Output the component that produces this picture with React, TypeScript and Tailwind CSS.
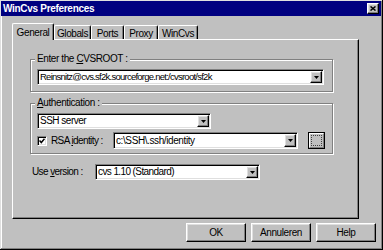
import React from "react";

const raised =
  "bg-[#c0c0c0] border-t border-l border-t-white border-l-white border-r border-b border-r-black border-b-black shadow-[inset_-1px_-1px_0_#808080,inset_1px_1px_0_#dfdfdf]";
const sunken =
  "bg-white border-t border-l border-t-[#808080] border-l-[#808080] border-r border-b border-r-white border-b-white shadow-[inset_1px_1px_0_#000,inset_-1px_-1px_0_#dfdfdf]";

function Arrow() {
  return (
    <svg width="5" height="3" viewBox="0 0 5 3">
      <polygon points="0,0 5,0 2.5,3" fill="#000" />
    </svg>
  );
}

function Combo({
  value,
  w,
  h = 16,
  textClass = "",
}: {
  value: string;
  w: number;
  h?: number;
  textClass?: string;
}) {
  return (
    <div className={`${sunken} flex items-stretch p-[1px]`} style={{ width: w, height: h }}>
      <div className={`flex-1 flex items-center pl-[1px] overflow-hidden whitespace-nowrap ${textClass}`}>{value}</div>
      <div className={`${raised} w-[12px] flex items-center justify-center`}>
        <Arrow />
      </div>
    </div>
  );
}

function Group({ label, h, children }: { label: React.ReactNode; h: number; children: React.ReactNode }) {
  return (
    <div
      className="relative w-[303px] border border-[#808080] shadow-[1px_1px_0_#fff,inset_1px_1px_0_#fff] pt-[9px] pl-[6px] flex flex-col"
      style={{ height: h }}
    >
      <span className="absolute left-[4px] top-[-7px] bg-[#c0c0c0] px-[2px] leading-[11px] whitespace-nowrap">
        {label}
      </span>
      {children}
    </div>
  );
}

const tabs = [
  { name: "Globals", w: 37 },
  { name: "Ports", w: 33 },
  { name: "Proxy", w: 34 },
  { name: "WinCvs", w: 40 },
];

export default function App() {
  return (
    <div className="w-[383px] h-[250px] bg-[#c0c0c0] text-black text-[10px] tracking-[-0.4px] leading-none font-['Liberation_Sans',Arial,sans-serif] shadow-[inset_-1px_-1px_0_#000,inset_1px_1px_0_#dfdfdf,inset_-2px_-2px_0_#808080,inset_2px_2px_0_#fff] flex flex-col overflow-hidden">
      {/* title bar */}
      <div className="mt-[1px] ml-[1px] mr-[2px] h-[15px] bg-[#000080] flex items-center justify-between pl-[2px] pr-[2px]">
        <span className="text-white font-bold text-[10px] tracking-[-0.3px]">WinCvs Preferences</span>
        <div className={`${raised} w-[12px] h-[11px] flex items-center justify-center`}>
          <svg width="6" height="5" viewBox="0 0 6 5">
            <path d="M0.5 0.5 L5.5 4.5 M5.5 0.5 L0.5 4.5" stroke="#000" strokeWidth="1.5" />
          </svg>
        </div>
      </div>

      {/* tabs */}
      <div className="mt-[7px] ml-[12px] h-[16px] flex items-end">
        <div className="relative z-10 -mb-px h-[17px] w-[42px] bg-[#c0c0c0] border-l border-t border-white border-r border-r-black rounded-t-[2px] shadow-[inset_-1px_0_0_#808080] flex items-center justify-center pt-[1px]">
          General
        </div>
        {tabs.map((t) => (
          <div
            key={t.name}
            className="h-[14px] border-l border-t border-white border-r border-r-black rounded-t-[2px] shadow-[inset_-1px_0_0_#808080] flex items-center justify-center pt-[2px]"
            style={{ width: t.w }}
          >
            {t.name}
          </div>
        ))}
      </div>

      {/* page */}
      <div className="ml-[12px] w-[347px] h-[180px] border-l border-t border-white border-r border-b border-r-black border-b-black shadow-[inset_-1px_-1px_0_#808080] pt-[19px] pl-[17px] flex flex-col">
        <Group
          h={33}
          label={
            <>
              Enter the <u className="underline-offset-1">C</u>VSROOT :
            </>
          }
        >
          <Combo
            value="Reinsnitz@cvs.sf2k.sourceforge.net:/cvsroot/sf2k"
            w={287}
            textClass="text-[9.5px] tracking-[-0.75px]"
          />
        </Group>

        <div className="mt-[11px]">
          <Group
            h={51}
            label={
              <>
                <u className="underline-offset-1">A</u>uthentication :
              </>
            }
          >
            <Combo value="SSH server" w={174} textClass="tracking-[-0.5px]" />
            <div className="mt-[3px] h-[17px] flex items-center">
              <div className={`${sunken} w-[10px] h-[10px] flex items-center justify-center`}>
                <svg width="6" height="6" viewBox="0 0 6 6">
                  <path d="M0.5 2.5 L2.3 4.5 L5.5 0.8" stroke="#000" strokeWidth="1.5" fill="none" />
                </svg>
              </div>
              <span className="w-[66px] pl-[4px] whitespace-nowrap tracking-[-0.6px]">
                RSA <u className="underline-offset-1">i</u>dentity :
              </span>
              <Combo value="c:\SSH\.ssh/identity" w={185} h={17} />
              <div className="ml-[10px] w-[17px] h-[17px] border border-black flex">
                <div className="flex-1 bg-[#c0c0c0] border-t border-l border-white border-r border-b border-r-[#808080] border-b-[#808080] flex items-center justify-center">
                  <div className="w-[11px] h-[11px] border border-dotted border-[#404040]" />
                </div>
              </div>
            </div>
          </Group>
        </div>

        <div className="mt-[10px] flex items-center">
          <span className="w-[65px] pl-[2px] whitespace-nowrap tracking-[-0.6px]">
            Use <u className="underline-offset-1">v</u>ersion :
          </span>
          <Combo value="cvs 1.10 (Standard)" w={165} textClass="tracking-[-0.6px]" />
        </div>
      </div>

      {/* buttons */}
      <div className="mt-[4px] pl-[186px] flex gap-[5px]">
        {["OK", "Annuleren", "Help"].map((b) => (
          <div key={b} className={`${raised} w-[60px] h-[19px] flex items-center justify-center`}>
            {b}
          </div>
        ))}
      </div>
    </div>
  );
}
